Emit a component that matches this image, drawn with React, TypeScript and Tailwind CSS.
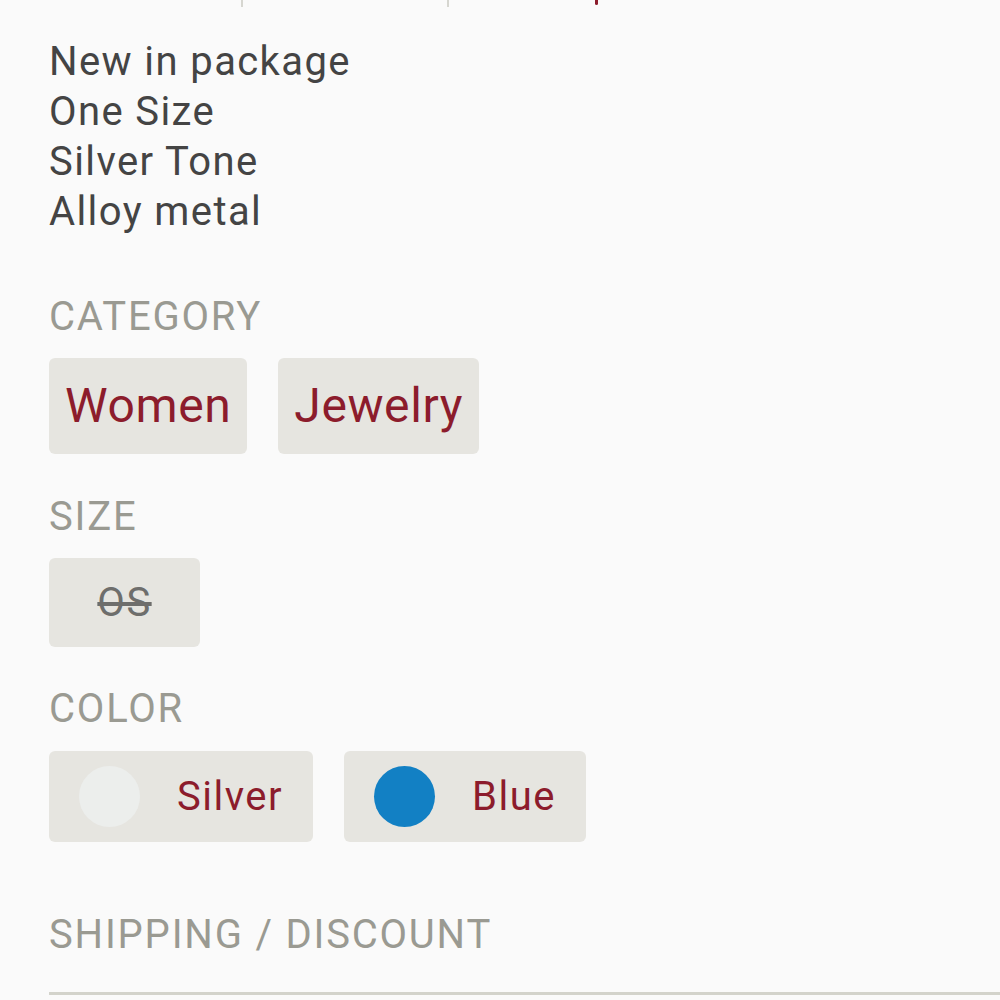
const details = ['New in package', 'One Size', 'Silver Tone', 'Alloy metal'];

const categories = ['Women', 'Jewelry'];

const colors = [
  { name: 'Silver', swatch: 'bg-[#eceeec]' },
  { name: 'Blue', swatch: 'bg-[#1280c4]' },
];

function SectionLabel({ children }: { children: string }) {
  return (
    <div className="text-[40px] leading-[50px] text-[#9a9a92] tracking-[1.8px]">{children}</div>
  );
}

export default function App() {
  return (
    <div className="min-h-screen w-full overflow-hidden bg-[#fafafa] font-['Roboto','Liberation_Sans',sans-serif]">
      {/* tail of the tab row above */}
      <div className="flex h-[7px]">
        <div className="w-[243px] border-r-2 border-[#d6d6d0]" />
        <div className="w-[206px] border-r-2 border-[#d6d6d0]" />
        <div className="relative w-[300px]">
          <span className="absolute left-[146px] top-0 h-[5px] w-[3px] rounded-b bg-[#8c1c2c]" />
        </div>
      </div>

      <div className="pl-[49px]">
        <div className="mt-[30px] text-[40px] leading-[50px] text-[#444444] tracking-[1.4px]">
          {details.map((d) => (
            <div key={d}>{d}</div>
          ))}
        </div>

        <div className="mt-[55px]">
          <SectionLabel>CATEGORY</SectionLabel>
          <div className="mt-[16px] flex gap-[31px]">
            {categories.map((c) => (
              <div
                key={c}
                className="flex h-[96px] items-center rounded-[6px] bg-[#e6e5e0] px-[16px] text-[48px] tracking-[0.6px] text-[#8c1c2c]"
              >
                {c}
              </div>
            ))}
          </div>
        </div>

        <div className="mt-[38px]">
          <SectionLabel>SIZE</SectionLabel>
          <div className="mt-[16px] flex">
            <div className="flex h-[89px] w-[151px] items-center justify-center rounded-[6px] bg-[#e6e5e0] text-[40px] tracking-[1.5px] text-[#6e6e6c] line-through">
              OS
            </div>
          </div>
        </div>

        <div className="mt-[37px]">
          <SectionLabel>COLOR</SectionLabel>
          <div className="mt-[17px] flex gap-[31px]">
            {colors.map((c) => (
              <div
                key={c.name}
                className="flex h-[91px] items-center gap-[37px] rounded-[6px] bg-[#e6e5e0] px-[30px] text-[40px] tracking-[1.5px] text-[#8c1c2c]"
              >
                <span className={`h-[61px] w-[61px] rounded-full ${c.swatch}`} />
                <span>{c.name}</span>
              </div>
            ))}
          </div>
        </div>

        <div className="mt-[68px]">
          <SectionLabel>SHIPPING / DISCOUNT</SectionLabel>
          <div className="mt-[32px] h-[3px] bg-[#d3d3cb]" />
        </div>
      </div>
    </div>
  );
}
